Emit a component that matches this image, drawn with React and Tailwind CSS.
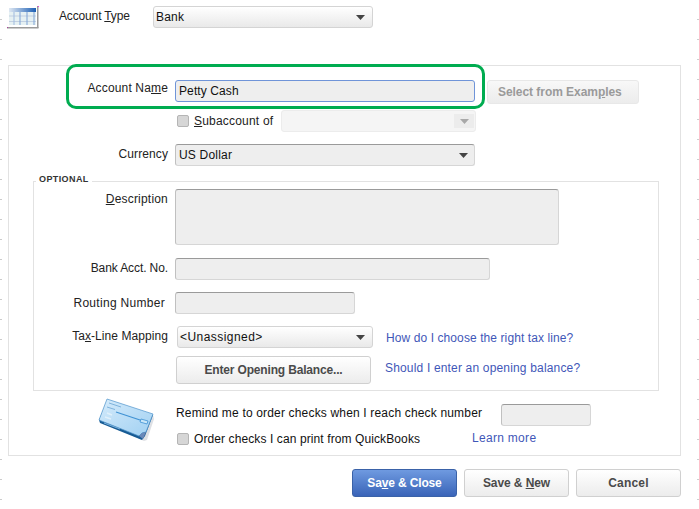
import React from "react";

const font = "font-['Liberation_Sans',Arial,sans-serif] text-[12px] tracking-[0.2px] leading-[14px]";

function Arrow({ muted }) {
  return (
    <svg width="9" height="5" viewBox="0 0 9 5" className="shrink-0">
      <path d="M0 0H9L4.5 5Z" fill={muted ? "#a8a8a8" : "#444444"} />
    </svg>
  );
}

function Light({ className, children, textClass = "" }) {
  return (
    <div className={`flex items-center justify-between rounded-[3px] border border-[#d4d4d4] bg-gradient-to-b from-white to-[#e9e9e9] pl-[2px] pr-[7px] text-[#111] ${className}`}>
      <span className={textClass}>{children}</span>
      <Arrow />
    </div>
  );
}

function Field({ className, children, focus }) {
  const edge = focus ? "border-[#6f94d8]" : "border-[#d6d6d6] border-t-[#9a9a9a] border-l-[#c0c0c0]";
  return <div className={`rounded-[3px] border ${edge} bg-[#eeeeee] text-[#111] ${className}`}>{children}</div>;
}

function Check() {
  return <span className="block h-[12px] w-[12px] shrink-0 rounded-[2px] border border-[#b5b5b5] bg-[#d6d6d6]" />;
}

function Label({ children, className = "" }) {
  return <div className={`w-[159px] shrink-0 text-right text-[#222] ${className}`}>{children}</div>;
}

function GroupLabel({ children, className = "" }) {
  return <div className={`w-[134px] shrink-0 text-right text-[#222] ${className}`}>{children}</div>;
}

function Btn({ children, className = "", primary }) {
  const skin = primary
    ? "border-[#3a62a8] from-[#6f9ae0] to-[#3a64b8] text-white"
    : "border-[#d0d0d0] from-white to-[#ececec] text-[#4a4a4a]";
  return (
    <div className={`flex h-[28px] items-center justify-center rounded-[3px] border bg-gradient-to-b font-bold ${skin} ${className}`}>
      <span>{children}</span>
    </div>
  );
}

function TableIcon() {
  return (
    <svg width="33" height="23" viewBox="0 0 33 23" className="shrink-0">
      <defs>
        <linearGradient id="th" x1="0" x2="1" y1="0" y2="0">
          <stop offset="0" stopColor="#dfe8f3" />
          <stop offset="1" stopColor="#1c5fb4" />
        </linearGradient>
      </defs>
      <rect x="31" y="0" width="1.5" height="22" fill="#9a9a9a" />
      <rect x="1" y="21" width="31.5" height="1.5" fill="#9a9a9a" />
      <rect x="32" y="0" width="1" height="1" fill="#f03ce0" />
      <rect x="1" y="21" width="1" height="1" fill="#b040a0" />
      <rect x="3" y="2" width="27" height="17" fill="#e6f1f3" />
      <rect x="3" y="2" width="27" height="4" fill="url(#th)" />
      {[9.5, 15].map((y) => <rect key={y} x="3" y={y} width="27" height="1" fill="#c2d0e2" />)}
      {[7.5, 13.5, 20.5, 27.5].map((x) => <rect key={x} x={x} y="6" width="1" height="13" fill={x === 7.5 ? "#a0bcdf" : "#7ea4d6"} />)}
    </svg>
  );
}

function CheckIcon() {
  return (
    <svg width="60" height="46" viewBox="0 0 60 46" className="shrink-0">
      <defs>
        <linearGradient id="ck" x1="0" x2="1" y1="0" y2="1">
          <stop offset="0" stopColor="#d5ebfb" />
          <stop offset="1" stopColor="#a0d0f2" />
        </linearGradient>
      </defs>
      <path d="M7 25L48 44L51 43L58 22L57 18L11 4Z" fill="#c8ccd2" opacity="0.6" />
      <path d="M11 4L57 18L49 39L46 43L4 26L3 23Z" fill="#175b94" />
      <path d="M11 2L57 17L50 35L46 36L43 39L3 23Z" fill="url(#ck)" stroke="#4f93cc" strokeWidth="0.7" />
      <path d="M13 6L25 10M11 10L19 12.5" stroke="#7fb3dc" strokeWidth="1" />
      <path d="M20 15L47 24" stroke="#3f92d4" strokeWidth="1.2" />
      <path d="M11 16L16 18M9 20L15 22" stroke="#e0f0fb" strokeWidth="1.5" />
      <path d="M45 22L52 24L51 27L44 25Z" fill="#c8e6f8" stroke="#3f92d4" strokeWidth="0.8" />
      <path d="M8 26L24 32" stroke="#78b0dc" strokeWidth="1" />
      <path d="M50 35L46 36L43 39L47 42Z" fill="#6a88b8" />
    </svg>
  );
}

export default function App() {
  return (
    <div className={`relative h-[509px] w-[699px] overflow-hidden bg-white ${font}`}>
      <div className="absolute left-0 top-0 h-full w-[2px] bg-[repeating-linear-gradient(to_bottom,transparent_0,transparent_19px,#cccccc_19px,#cccccc_20px)]" />
      <div className="absolute right-0 top-0 h-full w-[2px] bg-[repeating-linear-gradient(to_bottom,transparent_0,transparent_19px,#cfcfcf_19px,#cfcfcf_20px)]" />

      <div className="flex h-[65px] items-start pl-[6px] pt-[6px]">
        <TableIcon />
        <div className="ml-[20px] w-[94px] pt-[3px] tracking-[-0.15px] text-[#222]">Account <u>T</u>ype</div>
        <Light className="h-[22px] w-[220px]">Bank</Light>
      </div>

      <div className="relative ml-[8px] h-[391px] w-[673px] border border-[#e2e2e2]">
        <div className="flex items-start pt-[14px]">
          <Label className="pt-[1px] tracking-[0.15px]">Account Na<u>m</u>e</Label>
          <Field focus className="ml-[7px] flex h-[22px] w-[300px] items-center pl-[3px] tracking-[0.1px]">Petty Cash</Field>
          <div className="ml-[12px] flex h-[24px] w-[152px] items-center rounded-[3px] border border-[#e8e8e8] bg-gradient-to-b from-[#f8f8f8] to-[#ececec] pl-[10px] font-bold tracking-[-0.05px] text-[#9a9a9a]">
            <span>Select from Exam<u>p</u>les</span>
          </div>
        </div>

        <div className="mt-[6px] flex items-center">
          <div className="ml-[168px] flex w-[104px] items-center">
            <Check />
            <span className="ml-[5px] text-[#222]"><u>S</u>ubaccount of</span>
          </div>
          <div className="flex h-[22px] w-[195px] items-center justify-end rounded-[3px] border border-[#ececec] bg-[#f5f5f5]">
            <div className="mr-[1px] flex h-[14px] w-[20px] items-center justify-center bg-[#ececec]"><Arrow muted /></div>
          </div>
        </div>

        <div className="mt-[12px] flex items-start">
          <Label className="pt-[3px] tracking-[0.1px]">Currency</Label>
          <Field className="ml-[7px] flex h-[22px] w-[300px] items-center justify-between pl-[3px] pr-[6px]">
            <span>US Dollar</span><Arrow />
          </Field>
        </div>

        <div className="relative ml-[24px] mt-[15px] h-[210px] w-[626px] border border-[#e2e2e2] pt-[7px]">
          <div className="absolute left-[2px] top-[-9px] bg-white px-[3px] text-[9px] font-bold leading-[12px] tracking-[0.4px] text-[#333]">OPTIONAL</div>

          <div className="flex items-start">
            <GroupLabel className="pt-[3px]"><u>D</u>escription</GroupLabel>
            <Field className="ml-[7px] h-[56px] w-[384px]" />
          </div>
          <div className="mt-[13px] flex items-center">
            <GroupLabel className="pb-[2px] tracking-[-0.1px]">Bank Acct. No.</GroupLabel>
            <Field className="ml-[7px] h-[22px] w-[315px]" />
          </div>
          <div className="mt-[12px] flex items-center">
            <GroupLabel className="pr-[3px] tracking-[0.3px]">Routing Number</GroupLabel>
            <Field className="ml-[7px] h-[22px] w-[180px]" />
          </div>
          <div className="mt-[12px] flex items-center">
            <GroupLabel className="pb-[2px] tracking-[0.07px]">Ta<u>x</u>-Line Mapping</GroupLabel>
            <Light textClass="tracking-[0.45px]" className="ml-[9px] h-[22px] w-[196px]">&lt;Unassigned&gt;</Light>
            <a className="ml-[13px] pt-[2px] tracking-[0.09px] text-[#3f57b8]">How do I choose the right tax line?</a>
          </div>
          <div className="mt-[8px] flex items-center">
            <Btn className="ml-[142px] w-[195px] tracking-[-0.17px]">Enter Opening <span>Balance...</span></Btn>
            <a className="ml-[14px] pb-[4px] tracking-[0.17px] text-[#3f57b8]">Should I enter an opening balance?</a>
          </div>
        </div>

        <div className="flex items-start pt-[6px]">
          <div className="ml-[87px] w-[80px]"><CheckIcon /></div>
          <div>
            <div className="flex items-start">
              <div className="w-[325px] pt-[9px] tracking-[0.17px] text-[#111]">Remind me to order checks when I reach check number</div>
              <Field className="mt-[7px] h-[22px] w-[90px]" />
            </div>
            <div className="mt-[5px] flex items-center pl-[1px]">
              <Check />
              <span className="ml-[5px] w-[278px] tracking-[0.1px] text-[#111]">Order checks I can print from QuickBooks</span>
              <a className="pb-[1px] tracking-[0.3px] text-[#3f57b8]">Learn more</a>
            </div>
          </div>
        </div>

        <div className="absolute left-[57px] top-[-2px] h-[45px] w-[419px] rounded-[10px] border-[3px] border-[#00ac50]" />
      </div>

      <div className="ml-[352px] mt-[13px] flex gap-[7px]">
        <Btn primary className="w-[105px] tracking-[-0.15px]">Sa<u>v</u>e &amp; Close</Btn>
        <Btn className="w-[105px] tracking-[-0.1px]">Save &amp; <u>N</u>ew</Btn>
        <Btn className="w-[105px]">Cancel</Btn>
      </div>
    </div>
  );
}
